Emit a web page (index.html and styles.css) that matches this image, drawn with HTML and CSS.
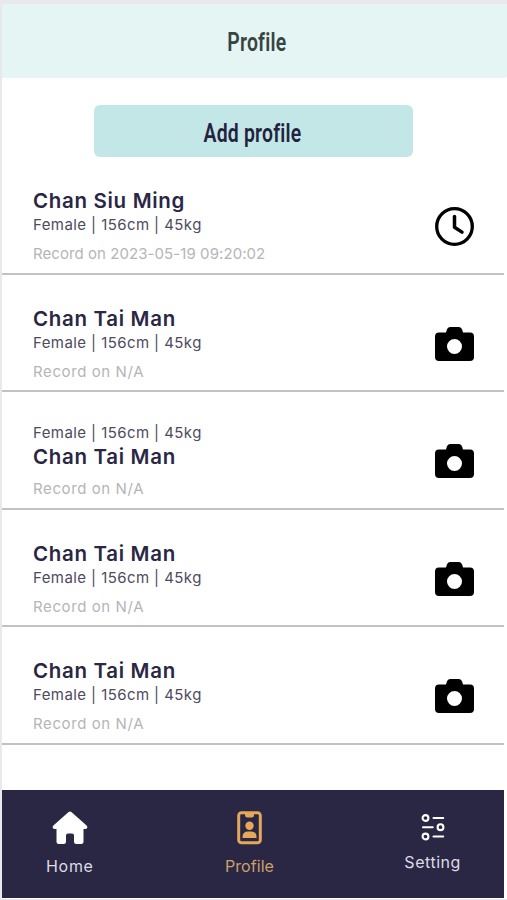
FILE: index.html
```html
<!DOCTYPE html>
<html lang="en">
<head>
<meta charset="utf-8">
<title>Profile</title>
<link rel="stylesheet" href="styles.css">
</head>
<body>
<svg class="symbols" aria-hidden="true">
  <symbol id="camera" viewBox="0 0 39 34">
    <path fill-rule="evenodd" d="M4 5.500h7l.8-2.700Q12.600 0 15 0h9q2.400 0 3.200 2.800L28 5.500h7q4 0 4 4V30q0 4-4 4H4q-4 0-4-4V9.500q0-4 4-4zM19.500 12a7.500 7.500 0 1 0 0 15a7.500 7.500 0 1 0 0-15z"/>
  </symbol>
</svg>
<div class="screen">
  <header class="header"><h1 class="title">Profile</h1></header>
  <div class="actions"><button class="add"><span class="add-label">Add profile</span></button></div>
  <main class="list">
    <article class="row">
      <div class="info">
        <h2 class="name">Chan Siu Ming</h2>
        <p class="meta">Female | 156cm | 45kg</p>
        <p class="record dated">Record on 2023-05-19 09:20:02</p>
      </div>
      <svg class="clock" viewBox="0 0 39 39" fill="none" stroke="#000" stroke-linecap="round" stroke-linejoin="round"><circle cx="19.500" cy="19.500" r="17.800" stroke-width="3.300"/><path stroke-width="3.500" d="M19.500 9.500v10.800l7.500 4.800"/></svg>
    </article>
    <article class="row">
      <div class="info">
        <h2 class="name">Chan Tai Man</h2>
        <p class="meta">Female | 156cm | 45kg</p>
        <p class="record">Record on N/A</p>
      </div>
      <svg class="camera"><use href="#camera"/></svg>
    </article>
    <article class="row swapped">
      <div class="info">
        <p class="meta">Female | 156cm | 45kg</p>
        <h2 class="name">Chan Tai Man</h2>
        <p class="record">Record on N/A</p>
      </div>
      <svg class="camera"><use href="#camera"/></svg>
    </article>
    <article class="row">
      <div class="info">
        <h2 class="name">Chan Tai Man</h2>
        <p class="meta">Female | 156cm | 45kg</p>
        <p class="record">Record on N/A</p>
      </div>
      <svg class="camera"><use href="#camera"/></svg>
    </article>
    <article class="row">
      <div class="info">
        <h2 class="name">Chan Tai Man</h2>
        <p class="meta">Female | 156cm | 45kg</p>
        <p class="record">Record on N/A</p>
      </div>
      <svg class="camera"><use href="#camera"/></svg>
    </article>
  </main>
  <nav class="nav">
    <a class="tab home">
      <svg width="36" height="34" viewBox="0 0 36 34" fill="#fff"><path d="M16.600 1.100Q18 0 19.400 1.100L34.600 14.500Q36 16 35 17.200Q34.500 18 33 18H31.500V30.500Q31.500 33 29 33H24.500Q22 33 22 30.500V24.500Q22 22.500 20 22.500H16Q14 22.500 14 24.500V30.500Q14 33 11.500 33H7Q4.500 33 4.500 30.500V18H3Q1.500 18 1 17.200Q0 16 1.400 14.500Z"/></svg>
      <span>Home</span>
    </a>
    <a class="tab profile">
      <svg width="25" height="34" viewBox="0 0 25 34" fill="#e5a75a"><rect x="1.700" y="1.700" width="21.600" height="30.100" rx="2.800" fill="none" stroke="#e5a75a" stroke-width="3"/><path d="M8 2h9v2q0 2.500-2.500 2.500h-4Q8 6.500 8 4z"/><circle cx="12.500" cy="14.800" r="4.200"/><path d="M5.500 27v-1q0-5.500 5.500-5.500h3q5.500 0 5.500 5.500v1z"/></svg>
      <span>Profile</span>
    </a>
    <a class="tab setting">
      <svg width="24" height="28" viewBox="0 0 24 28" fill="none" stroke="#fff" stroke-width="2.100" stroke-linecap="round"><circle cx="4.500" cy="5" r="2.900"/><path d="M12.500 5h9.700M2 14.200h9.700M12.500 23.500h9.700"/><circle cx="19.500" cy="14.200" r="2.900"/><circle cx="4.500" cy="23.500" r="2.900"/></svg>
      <span>Setting</span>
    </a>
  </nav>
</div>
</body>
</html>
```
FILE: styles.css
```css
* { box-sizing: border-box; margin: 0; padding: 0; }
body { width: 507px; height: 900px; overflow: hidden; background: #e9e9eb; font-family: Inter, "Open Sans", sans-serif; }
.symbols { display: none; }
.screen { height: 895px; margin: 4px 0 0 2px; background: #fff; display: flex; flex-direction: column; }
.header { height: 74px; flex: none; display: flex; align-items: center; justify-content: center; background: #e5f5f3; border-radius: 0 0 3px 0; padding: 2px 0 0 4px; }
.title, .add-label { font-family: Roboto, sans-serif; font-size: 25.500px; font-weight: 600; line-height: 30px; letter-spacing: .3px; transform: scaleX(.76); white-space: nowrap; }
.title { color: #374442; }
.actions { height: 79px; flex: none; padding: 27px 0 0 91.500px; }
.add { display: flex; align-items: center; justify-content: center; width: 319px; height: 52px; border: 0; border-radius: 6px; background: #c3e7e6; padding-top: 4px; }
.add-label { color: #24233f; display: block; }
.list { flex: none; width: 502px; }
.row { display: flex; justify-content: space-between; height: 117.500px; padding: 32px 30px 0 31px; border-bottom: 2px solid #c2c2c4; }
.name { height: 25px; font-size: 20.500px; line-height: 23px; font-weight: 600; color: #292744; letter-spacing: .68px; white-space: nowrap; }
.meta { height: 22px; font-size: 15px; line-height: 22px; color: #4d4b60; letter-spacing: .42px; white-space: nowrap; }
.record { margin-top: 8px; font-size: 15px; line-height: 20px; color: #b5b5b8; letter-spacing: .6px; white-space: nowrap; }
.dated { letter-spacing: .07px; }
.swapped .info { margin-top: -2px; }
.swapped .name { line-height: 25px; }
.swapped .record { margin-top: 10px; }
.clock { width: 39px; height: 39px; margin-top: 17.500px; }
.camera { width: 39px; height: 34px; margin-top: 20px; }
.nav { width: 502px; height: 108px; margin: auto 0 1px; flex: none; display: flex; justify-content: space-between; padding: 21px 43px 0 44px; background: #292744; }
.tab { display: flex; flex-direction: column; align-items: center; font-size: 16px; color: #dddce6; line-height: 22px; }
.tab.home { letter-spacing: .7px; }
.tab span { margin-top: 10px; }
.tab.profile { color: #cda069; letter-spacing: .05px; padding-left: 1px; }
.tab.setting { padding-top: 2px; letter-spacing: .55px; }
```
